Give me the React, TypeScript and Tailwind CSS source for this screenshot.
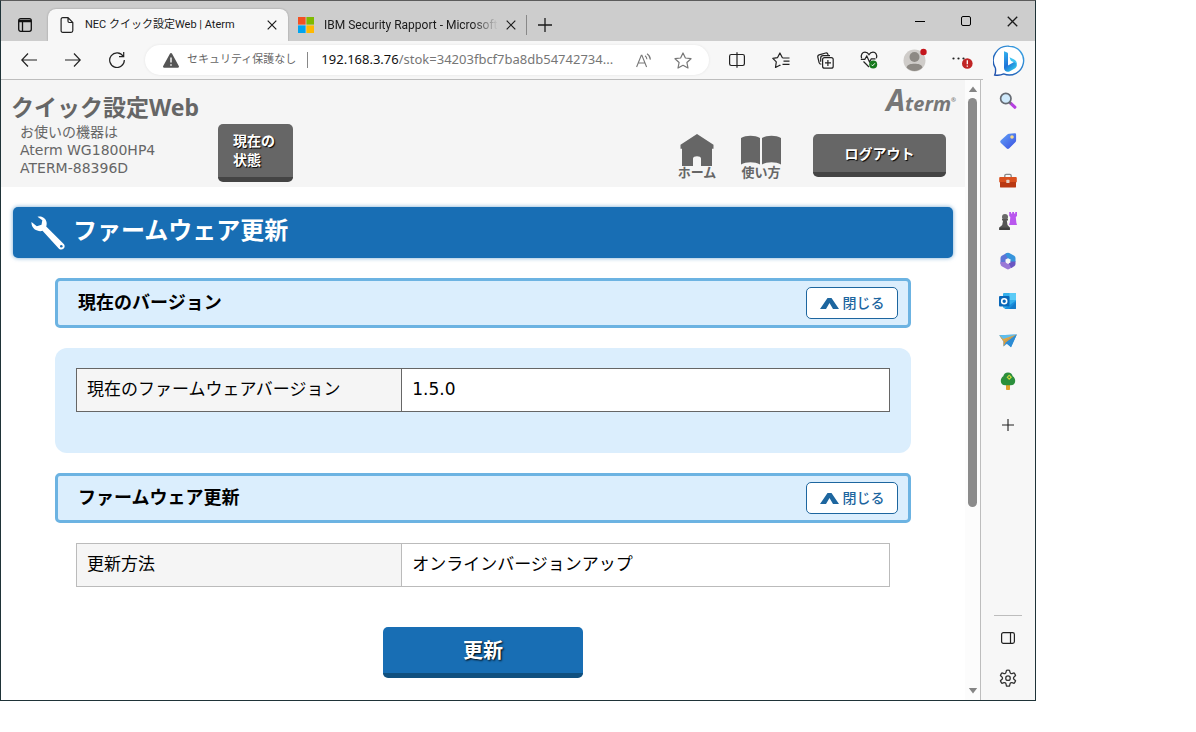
import React, { useState } from 'react';

interface IconProps {
  className?: string;
}

interface SectionHeaderProps {
  title: string;
  open: boolean;
  onToggle: () => void;
}

interface SettingTableProps {
  label: string;
  value: string;
  dark?: boolean;
}

const CloseIcon: React.FC<IconProps> = ({ className }) => (
  <svg viewBox="0 0 10 10" className={className} fill="none" stroke="currentColor" strokeWidth="1.2">
    <path d="M.7.7l8.6 8.6M9.3.7L.7 9.3" />
  </svg>
);

const PlusIcon: React.FC<IconProps> = ({ className }) => (
  <svg viewBox="0 0 14 14" className={className} fill="none" stroke="currentColor" strokeWidth="1.3">
    <path d="M7 0v14M0 7h14" />
  </svg>
);

const MicrosoftIcon: React.FC = () => (
  <svg viewBox="0 0 16 16" className="size-4 shrink-0">
    <path fill="#f25022" d="M0 0h7.6v7.6H0z" />
    <path fill="#7fba00" d="M8.4 0H16v7.6H8.4z" />
    <path fill="#00a4ef" d="M0 8.4h7.6V16H0z" />
    <path fill="#ffb900" d="M8.4 8.4H16V16H8.4z" />
  </svg>
);

const BingIcon: React.FC = () => (
  <svg viewBox="0 0 32 32" className="size-8">
    <defs>
      <linearGradient id="bing-ring" x1="0" y1="1" x2="1" y2="0">
        <stop offset="0" stopColor="#1b4aa8" />
        <stop offset="1" stopColor="#3aa8e8" />
      </linearGradient>
      <linearGradient id="bing-mark" x1="0" y1="0" x2="0.6" y2="1">
        <stop offset="0" stopColor="#35b6f0" />
        <stop offset="0.6" stopColor="#1f74d8" />
        <stop offset="1" stopColor="#2ec0e8" />
      </linearGradient>
    </defs>
    <path
      d="M16.3 1.2a14.4 14.4 0 1 1-5.6 27.7c-2.6 1.3-6 1.7-9 1.1.9-2 1.1-4.6.7-7A14.4 14.4 0 0 1 16.3 1.2z"
      fill="#fff"
      stroke="url(#bing-ring)"
      strokeWidth="1.4"
    />
    <path
      d="M11 6.3l3.2 1.300c.5.2.8.6.8 1.200v11.600l6.400-3.700c3.100 1.300 3.300 5 .4 6.700l-5.400 3c-1.500.8-3.200.5-4.300-.7-.7-.9-1.100-1.700-1.100-2.800z"
      fill="url(#bing-mark)"
    />
    <path d="M16.5 12.300l4.200 2c2.400 1.100 3.500 3.200 3.100 5.600-.6-1.500-1.700-2.300-3.200-2.900l-2-.8c-.5-.2-.8-.5-1-1z" fill="#3fc4f2" />
  </svg>
);

const SearchAppIcon: React.FC = () => (
  <svg viewBox="0 0 18 18" className="size-[18px]">
    <path d="M11.500 11.200l4.300 4" stroke="#b63fe0" strokeWidth="3.200" strokeLinecap="round" />
    <path d="M10 10l2 1.800" stroke="#777" strokeWidth="2" />
    <circle cx="6.800" cy="6.500" r="5.200" fill="#cfeafc" stroke="#666b73" strokeWidth="1.700" />
  </svg>
);

const ShoppingIcon: React.FC = () => (
  <svg viewBox="0 0 18 18" className="size-[18px]">
    <defs>
      <linearGradient id="tag" x1="0" y1="0" x2="1" y2="1">
        <stop offset="0" stopColor="#63a4f8" />
        <stop offset="1" stopColor="#3a4fe0" />
      </linearGradient>
    </defs>
    <path
      d="M10 1.800l5.800-.6c.8 0 1.300.5 1.300 1.300v6c0 .7-.3 1.200-.8 1.700l-6 6c-.9.900-1.900.9-2.800 0l-5.600-5.300c-.9-.9-.9-1.900 0-2.700l6.400-5.700c.5-.4 1-.6 1.700-.7z"
      fill="url(#tag)"
    />
    <circle cx="13" cy="5" r="1.800" fill="#f6d98a" />
  </svg>
);

const ToolsIcon: React.FC = () => (
  <svg viewBox="0 0 18 16" className="h-4 w-[18px]">
    <path d="M5.800 4V2.800c0-.9.500-1.400 1.400-1.400h3.600c.9 0 1.400.5 1.400 1.400V4" fill="none" stroke="#888" strokeWidth="1.300" />
    <rect x=".2" y="4" width="17.600" height="5.500" rx="1" fill="#d9501e" />
    <path d="M1 9h16v4.400c0 .8-.4 1.200-1.200 1.200H2.200c-.8 0-1.200-.4-1.200-1.200z" fill="#b93812" />
    <rect x="7.300" y="6.800" width="3.200" height="3.200" rx=".6" fill="#e4d2c8" />
  </svg>
);

const GamesIcon: React.FC = () => (
  <svg viewBox="0 0 18 18" className="size-[18px]">
    <path d="M10.200 0h1.800v1.600h1.200V0h1.800v1.600h1.200V0H18v4l-1.200 1 .5 5.500.7 2.500h-8l.8-2.500.5-5.500-1.100-1z" fill="#b957ee" />
    <circle cx="6" cy="5" r="3" fill="#6a6a6a" />
    <path d="M3 7h6v1.500H7.800l.7 4.500 2.300 2.400V18H.3v-2.600L3.200 13l.9-4.500H3z" fill="#555" />
    <path d="M.3 15.600h10.500V18H.3z" fill="#3f3f3f" />
  </svg>
);

const OfficeIcon: React.FC = () => (
  <svg viewBox="0 0 18 18" className="size-[18px]" fill="none" strokeWidth="5" strokeLinejoin="round">
    <path d="M9 3.200L4 6v6" stroke="#5f74d6" />
    <path d="M4 10v2l5 2.900 3.500-2" stroke="#9a78d6" />
    <path d="M11 13.700l3-1.700v-3" stroke="#6a56c2" />
    <path d="M14 9.500V6L9 3.200l-1.500.9" stroke="#3795dc" />
  </svg>
);

const OutlookIcon: React.FC = () => (
  <svg viewBox="0 0 18 18" className="size-[18px]">
    <rect x="4" y="1" width="13" height="15" rx="1" fill="#35b0ec" />
    <path d="M10.500 1H16c.6 0 1 .4 1 1v6h-6.500z" fill="#5ccbf6" />
    <path d="M5 17l12-8.500V16c0 .6-.4 1-1 1z" fill="#1a8fdc" />
    <path d="M10 17l7-7v6c0 .6-.4 1-1 1z" fill="#157bc8" />
    <rect x="0" y="4" width="10.500" height="10.500" rx="1" fill="#0a67b8" />
    <circle cx="5.200" cy="9.200" r="2.500" fill="none" stroke="#fff" strokeWidth="1.600" />
  </svg>
);

const DropIcon: React.FC = () => (
  <svg viewBox="0 0 18 14" className="h-3.5 w-[18px]">
    <path d="M.3 1.200L17.800.5 12 13.300 8.300 9.500l-3.800 3v-5z" fill="#3b97dc" />
    <path d="M.3 1.200L17.800.5 4.500 7.500z" fill="#5fbdec" />
    <path d="M.3 1.200l4.200 6.300L17.800.5 4.300 5z" fill="#e6a53c" />
    <path d="M4.500 7.500L17.800.5 6.500 8.800l-2 3.700z" fill="#d99a3c" />
    <path d="M17.800.5L6.500 8.800 12 13.300z" fill="#2c8cd4" />
  </svg>
);

const TreeIcon: React.FC = () => (
  <svg viewBox="0 0 16 18" className="h-[18px] w-4">
    <rect x="6" y="11" width="4" height="7" rx=".8" fill="#e0a02c" />
    <path d="M8 .5c2.600 0 4.300 1.700 4.700 3.800 1.600 1 2.500 2.700 2.500 4.600 0 2.700-1.900 4.400-4.400 4.400H5.200C2.700 13.300.8 11.600.8 8.900c0-1.900.9-3.600 2.500-4.600C3.700 2.200 5.400.5 8 .5z" fill="#2b8f3c" />
    <path d="M9.200 2.500L12 5.200 9.200 8 6.500 5.200z" fill="#c8d83c" />
    <circle cx="9.200" cy="5.200" r=".9" fill="#2b8f3c" />
  </svg>
);

const SidebarPanelIcon: React.FC = () => (
  <svg viewBox="0 0 14 12" className="h-3 w-3.5" fill="none" stroke="#222" strokeWidth="1.200">
    <rect x=".6" y=".6" width="12.800" height="10.800" rx="1.800" />
    <path d="M9.500.6v10.800" />
  </svg>
);

const GearIcon: React.FC = () => (
  <svg viewBox="0 0 24 24" className="size-[18px]" fill="none" stroke="#333" strokeWidth="1.700" strokeLinejoin="round">
    <path d="M9.300 4.600L10 1.700a10.500 10.500 0 0 1 4 0l.7 2.900a2 2 0 0 0 2.600 1.500l2.800-.9a10.500 10.500 0 0 1 2 3.500l-2.100 2a2 2 0 0 0 0 3l2.100 2a10.500 10.500 0 0 1-2 3.500l-2.800-.9a2 2 0 0 0-2.600 1.500l-.7 2.900a10.500 10.500 0 0 1-4 0l-.7-2.900a2 2 0 0 0-2.600-1.500l-2.800.9a10.500 10.500 0 0 1-2-3.500l2.100-2a2 2 0 0 0 0-3l-2.100-2a10.500 10.500 0 0 1 2-3.500l2.800.9a2 2 0 0 0 2.600-1.500z" />
    <circle cx="12" cy="12.200" r="3" />
  </svg>
);

const sidebarApps = [
  { name: '検索', icon: SearchAppIcon },
  { name: 'ショッピング', icon: ShoppingIcon },
  { name: 'ツール', icon: ToolsIcon },
  { name: 'ゲーム', icon: GamesIcon },
  { name: 'Microsoft 365', icon: OfficeIcon },
  { name: 'Outlook', icon: OutlookIcon },
  { name: 'ドロップ', icon: DropIcon },
  { name: 'E-tree', icon: TreeIcon },
];

const TitleBar: React.FC = () => (
  <div className="flex h-10 items-end bg-[#cdcdcd] text-[11px] leading-4 text-[#1a1a1a]">
    <button aria-label="タブ操作メニュー" className="flex h-8 w-[47px] shrink-0 items-center justify-center">
      <svg viewBox="0 0 14 14" className="size-3.5" fill="none" stroke="#111" strokeWidth="1.300">
        <rect x=".7" y=".7" width="12.600" height="12.600" rx="2" />
        <path d="M1 2.300h12M1 3.500h12M4.500 4v9" />
      </svg>
    </button>
    <div className="flex h-8 w-60 shrink-0 items-center rounded-t-lg bg-[#f7f7f7] pr-2 pl-3 shadow-[0_0_2px_rgba(0,0,0,0.3)]">
      <svg viewBox="0 0 14 16" className="h-4 w-3.5 shrink-0" fill="none" stroke="#222" strokeWidth="1.200">
        <path d="M2.800.7H8l4.800 4.800v8c0 1.100-.6 1.800-1.700 1.800H2.800c-1.100 0-1.700-.7-1.700-1.800v-11c0-1.100.6-1.800 1.700-1.800zM8 .7v3.600c0 .8.400 1.200 1.200 1.200h3.600" />
      </svg>
      <span className="ml-[11px] flex-1 whitespace-nowrap">NEC クイック設定Web | Aterm</span>
      <button aria-label="タブを閉じる" className="flex size-4 items-center justify-center">
        <CloseIcon className="size-2.5" />
      </button>
    </div>
    <div className="flex h-8 shrink-0 items-center pr-[7px] pl-2.5">
      <MicrosoftIcon />
      <span className="ml-2.5 w-[174px] overflow-hidden mask-r-from-85% text-[12px] whitespace-nowrap">
        IBM Security Rapport - Microsoft
      </span>
      <button aria-label="タブを閉じる" className="ml-[5px] flex size-4 items-center justify-center">
        <CloseIcon className="size-2.5" />
      </button>
    </div>
    <div className="flex h-8 items-center">
      <span className="h-5 w-px bg-[#888]" />
      <button aria-label="新しいタブ" className="flex h-8 w-9 items-center justify-center">
        <PlusIcon className="size-3.5" />
      </button>
    </div>
    <div className="ml-auto flex h-10 shrink-0">
      <button aria-label="最小化" className="flex w-[46px] items-center justify-center">
        <span className="h-px w-2.5 bg-black" />
      </button>
      <button aria-label="最大化" className="flex w-[46px] items-center justify-center">
        <span className="size-2.5 rounded-[2px] border border-black" />
      </button>
      <button aria-label="閉じる" className="flex w-[46px] items-center justify-center">
        <CloseIcon className="size-[11px]" />
      </button>
    </div>
  </div>
);

const toolButton = 'flex h-8 w-11 shrink-0 items-center justify-center';

const Toolbar: React.FC = () => {
  const [path, setPath] = useState('/stok=34203fbcf7ba8db54742734...');

  return (
    <div className="flex h-[39px] shrink-0 bg-[#f7f7f7]">
      <div className="flex min-w-0 flex-1 items-center border-b border-[#bdbdbd] pl-1.5">
        <button aria-label="戻る" className={toolButton}>
          <svg viewBox="0 0 16 14" className="h-3.5 w-4" fill="none" stroke="#222" strokeWidth="1.200">
            <path d="M7 .5L.8 7 7 13.500M.8 7H16" />
          </svg>
        </button>
        <button aria-label="進む" className={toolButton}>
          <svg viewBox="0 0 16 14" className="h-3.5 w-4" fill="none" stroke="#222" strokeWidth="1.200">
            <path d="M9 .5L15.200 7 9 13.500M15.200 7H0" />
          </svg>
        </button>
        <button aria-label="更新" className={toolButton}>
          <svg viewBox="0 0 16 16" className="size-4" fill="none" stroke="#222" strokeWidth="1.200">
            <path d="M14.200 4.300A7.300 7.300 0 1 0 15.300 8M14.700 0v4.700H10" />
          </svg>
        </button>
        <div className="mx-1.5 flex h-[30px] min-w-0 flex-1 items-center rounded-full bg-white pr-4 pl-[18px] text-[13px] shadow-[0_0_3px_rgba(0,0,0,0.08)]">
          <svg viewBox="0 0 16 15" className="h-[15px] w-4 shrink-0">
            <path d="M6.900.7c.5-.9 1.700-.9 2.200 0l6.700 12.200c.5.900-.1 1.900-1.100 1.900H1.300c-1 0-1.600-1-1.100-1.900z" fill="#555" />
            <path d="M8 4.500v5M8 11.200v1.500" stroke="#fff" strokeWidth="1.400" />
          </svg>
          <span className="ml-2 shrink-0 text-[11px] text-[#666]">セキュリティ保護なし</span>
          <span className="mr-[13px] ml-[11px] h-4 w-px shrink-0 bg-[#888]" />
          <label htmlFor="address" className="font-['Noto_Sans',sans-serif] text-[#111]">192.168.3.76</label>
          <input
            id="address"
            type="text"
            value={path}
            onChange={e => setPath(e.target.value)}
            className="min-w-0 flex-1 bg-transparent font-['Noto_Sans',sans-serif] text-[#767676] outline-none"
          />
          <button aria-label="音声で読み上げる" className="ml-3 flex h-6 w-5 items-center justify-center">
            <svg viewBox="0 0 16 15" className="h-[15px] w-4" fill="none" stroke="#777" strokeWidth="1.100">
              <path d="M.6 14L5.300 2.200h.6L10.600 14M2.300 10h6.600M9 2.800c1.200.8 1.800 2 1.900 3.500M11 .8c2 1.200 3.200 3 3.400 5.800" />
            </svg>
          </button>
          <button aria-label="お気に入りに追加" className="ml-[19px] flex size-5 items-center justify-center">
            <svg viewBox="0 0 18 17" className="h-[17px] w-[18px]" fill="none" stroke="#777" strokeWidth="1.200" strokeLinejoin="round">
              <path d="M9 1l2.400 5 5.600.7-4.100 3.800 1.100 5.500L9 13.300 4 16l1.100-5.500L1 6.700 6.600 6z" />
            </svg>
          </button>
        </div>
        <button aria-label="画面を分割する" className={toolButton}>
          <svg viewBox="0 0 16 16" className="size-4" fill="none" stroke="#222" strokeWidth="1.200">
            <path d="M6 2.500H2.300C1.200 2.500.6 3.100.6 4.200v7.600c0 1.100.6 1.700 1.700 1.700H6M10 2.500h3.700c1.100 0 1.700.6 1.700 1.700v7.600c0 1.100-.6 1.700-1.700 1.700H10M6 2.500h4M6 13.500h4M8 .3v15.400" />
          </svg>
        </button>
        <button aria-label="お気に入り" className={toolButton}>
          <svg viewBox="0 0 18 17" className="h-[17px] w-[18px]" fill="none" stroke="#222" strokeWidth="1.200" strokeLinejoin="round">
            <path d="M10.500 6L7.900 1 5.600 5.600.8 6.300l3.500 3.500-.8 5.700 4.300-2.300.7.400M10.500 6h7M11.500 9.200h6M10.500 12.400h7" />
          </svg>
        </button>
        <button aria-label="コレクション" className={toolButton}>
          <svg viewBox="0 0 17 17" className="size-[17px]" fill="none" stroke="#222" strokeWidth="1.200">
            <rect x="5.600" y="5.600" width="10.600" height="10.600" rx="2" />
            <path d="M10.900 8v6M8 10.900h6M4.300 12.200c-1.200 0-1.900-.6-2.200-1.600L.8 5c-.2-1 .3-1.800 1.300-2.100l6.600-1.900c1-.3 1.800.2 2.100 1.200l.5 1.600" />
            <path d="M3.700 9.800V6c0-1.500.8-2.300 2.300-2.300h7" />
          </svg>
        </button>
        <button aria-label="ブラウザー エッセンシャル" className={toolButton}>
          <svg viewBox="0 0 18 18" className="size-[18px]" fill="none">
            <path d="M1.600 7.200C.4 3.800 2.500 1.200 5 1.200c1.800 0 3.100.9 4 2.400.9-1.500 2.200-2.400 4-2.400 2.500 0 4.600 2.600 3.400 6M3.500 10.500L9 16M.8 8.300h4l2-3.300 2.700 6 1.800-3.200h4.200" stroke="#222" strokeWidth="1.200" />
            <circle cx="13.200" cy="13.500" r="4" fill="#167a1d" />
            <path d="M11.500 13.700l1.100 1.100 2.300-2.500" stroke="#fff" strokeWidth="1" />
          </svg>
        </button>
        <button aria-label="プロファイル" className="flex h-8 w-12 shrink-0 items-center justify-center">
          <svg viewBox="0 0 24 24" className="size-6">
            <circle cx="11.500" cy="12.500" r="11" fill="#cfccc9" />
            <circle cx="11.500" cy="9" r="5" fill="#8d8984" />
            <path d="M3.500 19.500c1-3.300 4-3.800 8-3.800s7 .5 8 3.800a11 11 0 0 1-16 0z" fill="#8d8984" />
            <circle cx="20.500" cy="4" r="3.200" fill="#c4161c" />
          </svg>
        </button>
        <button aria-label="設定など" className={toolButton}>
          <svg viewBox="0 0 24 18" className="h-[18px] w-6">
            <circle cx="4.500" cy="7.500" r="1.100" fill="#222" />
            <circle cx="9.500" cy="7.500" r="1.100" fill="#222" />
            <circle cx="14.500" cy="7.500" r="1.100" fill="#222" />
            <circle cx="18.300" cy="12.500" r="5.300" fill="#c02424" />
            <path d="M18.300 9.300v3.900M18.300 14.400v1.300" stroke="#fff" strokeWidth="1.300" />
          </svg>
        </button>
      </div>
      <button aria-label="Bing チャット" className="flex w-[52px] shrink-0 items-center justify-center">
        <BingIcon />
      </button>
    </div>
  );
};

const Sidebar: React.FC = () => (
  <aside className="flex w-[55px] shrink-0 flex-col items-center border-l border-[#bdbdbd] bg-[#f7f7f7] pt-px pb-0.5">
    {sidebarApps.map(app => (
      <button key={app.name} aria-label={app.name} className="flex h-10 w-10 items-center justify-center">
        <app.icon />
      </button>
    ))}
    <button aria-label="カスタマイズ" className="mt-1 flex h-10 w-10 items-center justify-center text-[#222]">
      <PlusIcon className="size-3" />
    </button>
    <span className="mt-auto mb-0.5 h-px w-7 bg-[#bdbdbd]" />
    <button aria-label="サイドバーを隠す" className="flex h-10 w-10 items-center justify-center">
      <SidebarPanelIcon />
    </button>
    <button aria-label="設定" className="flex h-10 w-10 items-center justify-center">
      <GearIcon />
    </button>
  </aside>
);

const ScrollBar: React.FC = () => (
  <div className="flex w-[15px] shrink-0 flex-col items-center bg-[#fcfcfc] py-1.5">
    <svg viewBox="0 0 10 6" className="h-1.5 w-2.5 shrink-0">
      <path d="M5 .5L9.200 6H.8z" fill="#858585" />
    </svg>
    <div className="my-1.5 w-full flex-1">
      <div className="mx-auto h-[70%] w-[9px] rounded-full bg-[#8b8b8b]" />
    </div>
    <svg viewBox="0 0 10 6" className="h-1.5 w-2.5 shrink-0">
      <path d="M5 5.500L.8 0h8.400z" fill="#858585" />
    </svg>
  </div>
);

const PageHeader: React.FC = () => (
  <header className="flex h-[107px] justify-between bg-[#f5f5f5] pr-[19px] pl-2.5 text-[#666]">
    <div>
      <h1 className="mt-3 font-['Noto_Sans','Noto_Sans_CJK_JP',sans-serif] text-[23px] leading-[31px] font-bold">
        クイック設定Web
      </h1>
      <div className="flex items-start">
        <p className="w-[207px] pl-[9px] text-[14px] leading-[18px]">
          お使いの機器は
          <br />
          Aterm WG1800HP4
          <br />
          ATERM-88396D
        </p>
        <button className="mt-px h-[58px] w-[75px] rounded-[5px] border-b-[5px] border-[#444] bg-[#666] pl-[15px] text-left text-[14px] leading-[19px] font-bold text-white text-shadow-[1px_1px_1px_#000]">
          現在の
          <br />
          状態
        </button>
      </div>
    </div>
    <div className="flex flex-col">
      <div className="-mr-2.5 flex h-[54px] items-baseline justify-end pt-0.5 font-['Noto_Sans',sans-serif] leading-[36px] font-bold text-[#777] italic">
        <span className="text-[30px]">A</span>
        <span className="text-[20px]">term</span>
        <span className="self-start text-[6px]">®</span>
      </div>
      <div className="flex items-start text-[13px] leading-[14px] font-bold">
        <a href="#home" className="flex w-[38px] flex-col items-center whitespace-nowrap">
          <svg viewBox="0 0 34 32" className="h-8 w-[34px]">
            <path d="M17 0L33.500 10.800v4H32V32H21v-7.500c0-3-8-3-8 0V32H2V14.800H.5v-4z" fill="#666" />
          </svg>
          ホーム
        </a>
        <a href="#manual" className="ml-[25px] flex w-10 flex-col items-center whitespace-nowrap">
          <svg viewBox="0 0 40 32" className="h-8 w-10">
            <path d="M0 4c5-3 14-3 19 0v26.500c-5-3-14-3-19 0zM21 4c5-3 14-3 19 0v26.500c-5-3-14-3-19 0z" fill="#666" />
          </svg>
          使い方
        </a>
        <button className="ml-8 h-[43px] w-[133px] rounded-[5px] border-b-[5px] border-[#444] bg-[#666] pt-0.5 text-[14px] leading-[20px] text-white text-shadow-[1px_1px_1px_#000]">
          ログアウト
        </button>
      </div>
    </div>
  </header>
);

const SectionHeader: React.FC<SectionHeaderProps> = ({ title, open, onToggle }) => (
  <div className="flex h-[50px] items-center justify-between rounded-[5px] border-[3px] border-[#6cb3e2] bg-[#dbeefd] pr-2.5 pl-5">
    <h3 className="text-[18px] leading-[26px] font-bold text-black">{title}</h3>
    <button
      onClick={onToggle}
      aria-expanded={open}
      className="flex h-8 w-[92px] items-center justify-center gap-1 rounded-[5px] border border-[#1d669f] bg-white text-[14px] leading-5 font-medium text-[#1d669f]"
    >
      <svg viewBox="0 0 19 11" className={open ? 'h-[11px] w-[19px]' : 'h-[11px] w-[19px] rotate-180'}>
        <path d="M0 11L7.500 0h4L19 11h-6L9.500 5 6 11z" fill="currentColor" />
      </svg>
      {open ? '閉じる' : '開く'}
    </button>
  </div>
);

const SettingTable: React.FC<SettingTableProps> = ({ label, value, dark }) => {
  const line = dark ? 'border border-[#666]' : 'border border-[#bbb]';

  return (
    <table className="w-full table-fixed border-collapse text-left text-[17px] leading-6 text-black">
      <tbody>
        <tr className="h-[43px]">
          <th scope="row" className={`${line} w-2/5 bg-[#f5f5f5] px-2.5 pb-0.5 font-normal`}>{label}</th>
          <td className={`${line} bg-white px-2.5 pb-0.5`}>{value}</td>
        </tr>
      </tbody>
    </table>
  );
};

const FirmwarePage: React.FC = () => {
  const [versionOpen, setVersionOpen] = useState(true);
  const [updateOpen, setUpdateOpen] = useState(true);

  return (
    <div className="min-w-0 flex-1 overflow-hidden bg-white font-['DejaVu_Sans','Noto_Sans_CJK_JP',sans-serif]">
      <PageHeader />
      <main className="px-3 pt-5">
        <h2 className="flex h-[51px] items-center rounded-[5px] bg-[#186eb4] pl-[18px] text-[24px] leading-8 font-bold text-white shadow-[0_0_4px_rgba(24,110,180,0.6)]">
          <svg viewBox="0 0 34 34" className="mr-2 size-[34px]">
            <path
              d="M6.500.8C10.500-.6 15 2 15.600 6.500c.2 1.700 0 2.900-.4 4L33 28.200c1 1.500.8 3.200-.3 4.400-1.200 1.200-3 1.400-4.500.3L11.500 14.800c-1.300.6-3.300.6-5.200-.2C2.500 13.200.2 9.800.5 6l5.300 4.200 4.700-1.400.8-4.500z"
              fill="#fff"
            />
            <circle cx="30.300" cy="30.200" r="1.300" fill="#186eb4" />
          </svg>
          <span className="pb-1">ファームウェア更新</span>
        </h2>
        <div className="flex flex-col gap-5 px-[42px] pt-5">
          <SectionHeader title="現在のバージョン" open={versionOpen} onToggle={() => setVersionOpen(!versionOpen)} />
          {versionOpen && (
            <div className="rounded-xl bg-[#dbeefd] px-[21px] pt-5 pb-[41px]">
              <SettingTable label="現在のファームウェアバージョン" value="1.5.0" dark />
            </div>
          )}
          <SectionHeader title="ファームウェア更新" open={updateOpen} onToggle={() => setUpdateOpen(!updateOpen)} />
          {updateOpen && (
            <div className="flex flex-col items-center gap-10 px-[21px]">
              <SettingTable label="更新方法" value="オンラインバージョンアップ" />
              <button className="h-[51px] w-[200px] rounded-[5px] border-b-[5px] border-[#10507f] bg-[#186eb4] pt-0.5 text-[20px] leading-7 font-bold text-white text-shadow-[1px_1px_2px_#000]">
                更新
              </button>
            </div>
          )}
        </div>
      </main>
    </div>
  );
};

const App: React.FC = () => (
  <div className="flex h-screen bg-white pr-40 pb-[31px] font-['Roboto','Noto_Sans_CJK_JP',sans-serif]">
    <div className="flex min-w-0 flex-1 flex-col border border-[#1f3338] border-t-[#5c5c5c]">
      <TitleBar />
      <Toolbar />
      <div className="flex min-h-0 flex-1">
        <FirmwarePage />
        <ScrollBar />
        <Sidebar />
      </div>
    </div>
  </div>
);

export default App;
